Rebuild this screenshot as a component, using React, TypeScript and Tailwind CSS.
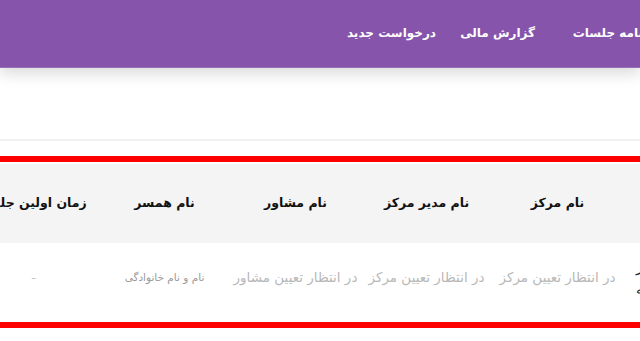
import React from 'react';

const navItems = [
  { label: 'برنامه جلسات', w: 'w-[88px]' },
  { label: 'گزارش مالی', w: 'w-[67px]' },
  { label: 'درخواست جدید', w: 'w-[88px]' },
];

const headers = ['نام زوج', 'نام مرکز', 'نام مدیر مرکز', 'نام مشاور', 'نام همسر', 'زمان اولین جلسه', 'وضعیت'];

const App: React.FC = () => {
  return (
    <div
      dir="rtl"
      className="w-[640px] h-[341px] overflow-hidden bg-white font-['DejaVu_Sans',sans-serif]"
    >
      {/* Top nav */}
      <header className="relative z-10 h-[68px] bg-[#8654ab] border-b border-[#9770b6] shadow-[0_6px_14px_rgba(0,0,0,0.14)] flex items-center overflow-hidden">
        <nav className="flex items-center gap-[32px] mr-[-15px] -mt-[2px]">
          {navItems.map((item) => (
            <a
              key={item.label}
              className={`${item.w} shrink-0 whitespace-nowrap text-[12px] font-bold text-white text-right`}
            >
              {item.label}
            </a>
          ))}
        </nav>
      </header>

      {/* Toolbar area */}
      <div className="h-[71px]" />
      <div className="h-[2px] bg-[#f1f1f1]" />
      <div className="h-[15px]" />

      {/* Table */}
      <div className="border-y-[6px] border-[#ff0000] pt-[2px] overflow-hidden">
        <div className="w-max mr-[-114px]">
          <div className="grid grid-cols-[repeat(7,131px)] h-[79px] bg-[#f4f4f4] items-center">
            {headers.map((h) => (
              <div key={h} className="text-center text-[12.5px] font-bold text-[#111] whitespace-nowrap">
                {h}
              </div>
            ))}
          </div>
          <div className="grid grid-cols-[repeat(7,131px)] h-[79px] items-center">
            <div className="text-left pl-[13px] text-[14px] leading-[22px] text-[#222] -mt-[10px]">
              <div>علی پرویز</div>
              <div>فاطمه</div>
            </div>
            <div className="text-center text-[13.5px] text-[#b8b8b8] whitespace-nowrap -mt-[10px]">در انتظار تعیین مرکز</div>
            <div className="text-center text-[13.5px] text-[#b8b8b8] whitespace-nowrap -mt-[10px]">در انتظار تعیین مرکز</div>
            <div className="text-center text-[13.5px] text-[#b8b8b8] whitespace-nowrap -mt-[10px]">در انتظار تعیین مشاور</div>
            <div className="text-center text-[10.5px] text-[#9a9a9a] whitespace-nowrap -mt-[10px]">نام و نام خانوادگی</div>
            <div className="text-center text-[13px] text-[#c4c4c4] -mt-[10px]">-</div>
            <div className="text-center text-[13px] text-[#c4c4c4] -mt-[10px]">-</div>
          </div>
        </div>
      </div>
    </div>
  );
};

export default App;
